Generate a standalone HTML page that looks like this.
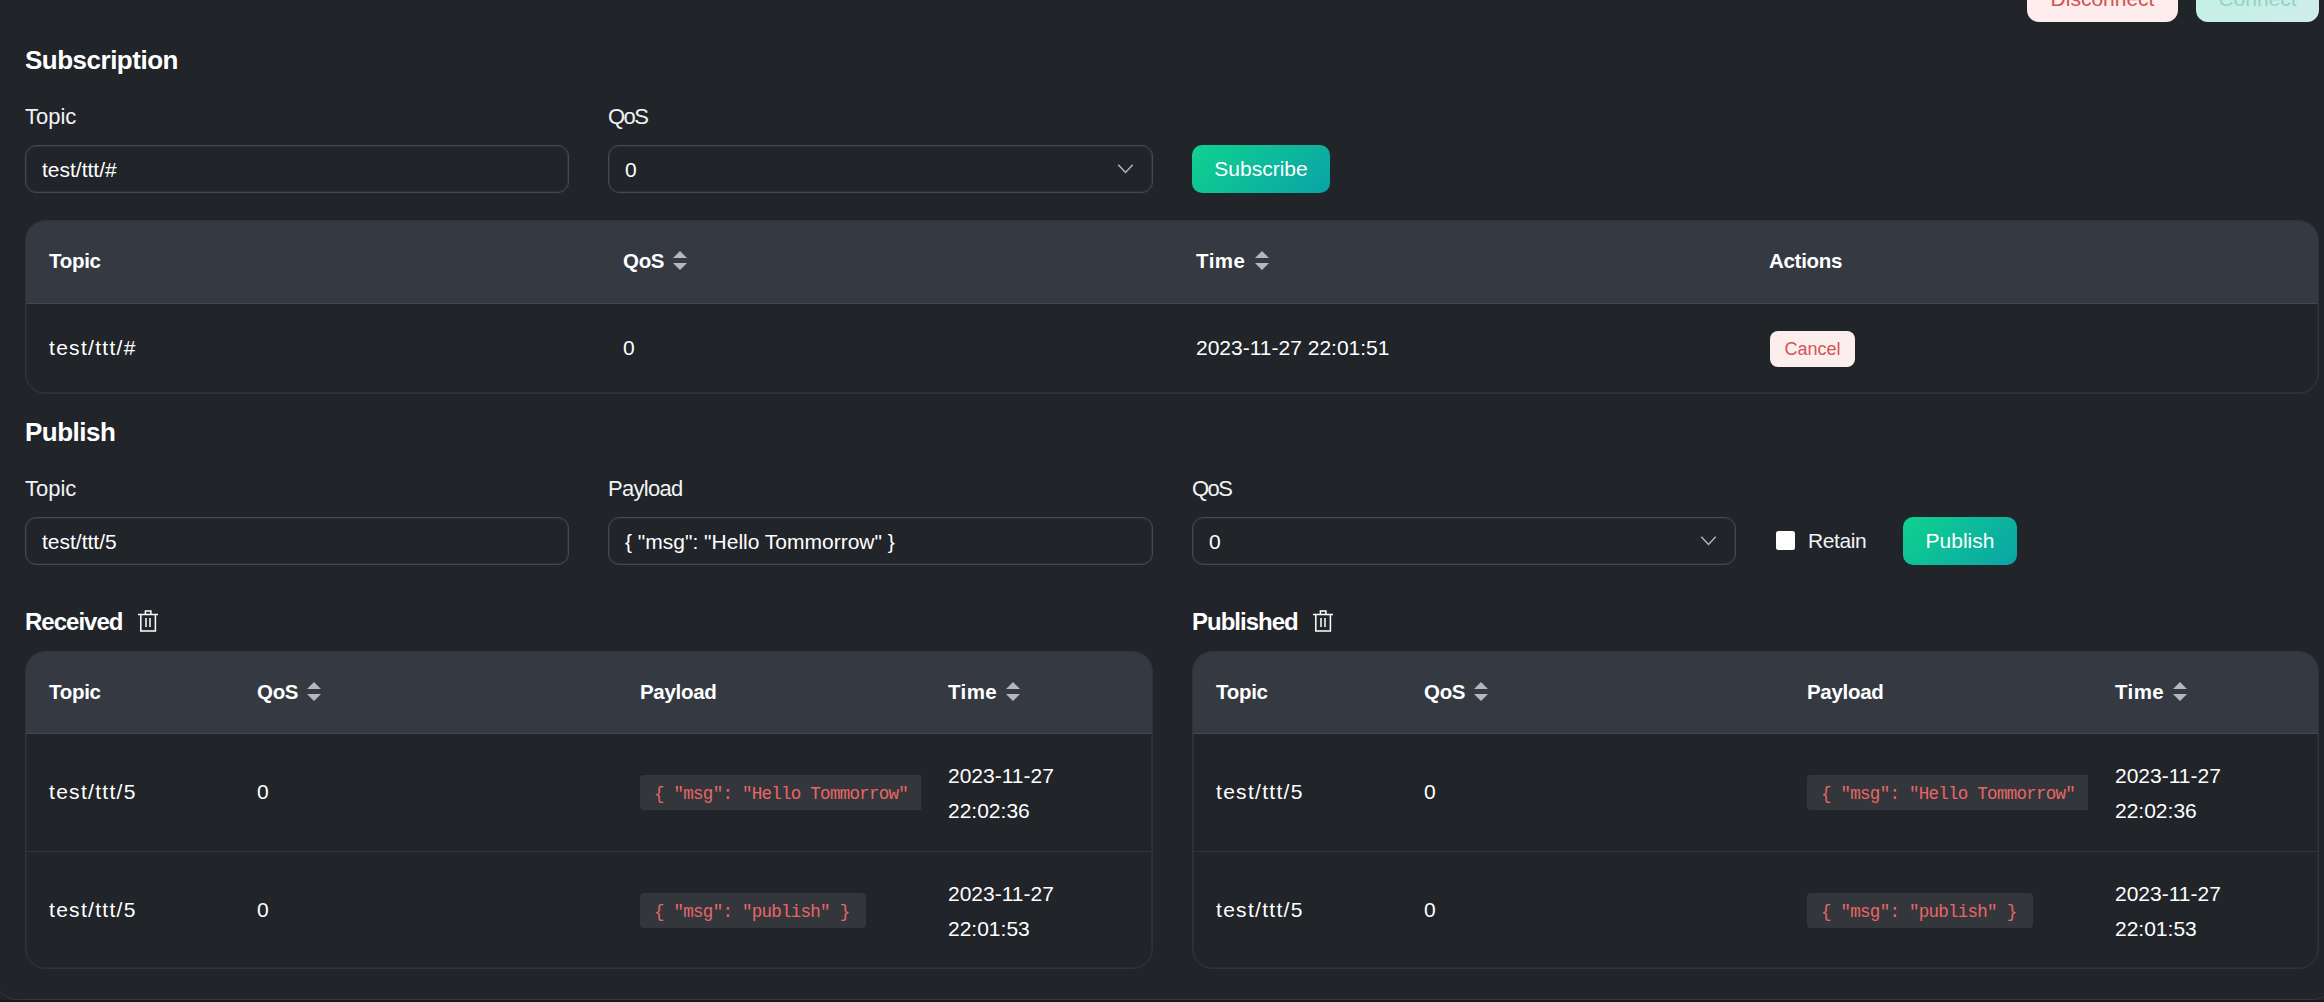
<!DOCTYPE html>
<html><head><meta charset="utf-8">
<style>
*{box-sizing:border-box;margin:0;padding:0}
html,body{width:2324px;height:1002px;overflow:hidden;background:#212429;font-family:"Liberation Sans",sans-serif;color:#f2f3f5}
.card{position:absolute;left:-5px;top:-40px;width:2340px;height:1040px;background:#212429;border:1px solid #33363d;border-radius:22px}
.abs{position:absolute}
.h1{font-size:26px;font-weight:bold;letter-spacing:-0.5px;line-height:30px;color:#fff}
.h2{font-size:24px;font-weight:bold;letter-spacing:-1px;line-height:28px;color:#fff}
.lbl{font-size:22px;line-height:26px;color:#f2f3f5}
.inp{position:absolute;height:48px;border:1px solid #46494f;box-shadow:inset 0 0 0 1px rgba(70,73,79,0.35);border-radius:11px;background:#212429;font-size:21px;line-height:48px;padding-left:16px;color:#fff}
.chev{position:absolute;right:19px;top:18px}
.btn-g{position:absolute;height:48px;border-radius:10px;background:linear-gradient(135deg,#10d28f 0%,#0aa3a6 100%);color:#fff;font-size:21px;line-height:48px;text-align:center}
.tbl{position:absolute;border:1px solid #30333a;border-radius:20px;overflow:hidden;background:#212429;box-shadow:inset 0 0 0 1px rgba(48,51,60,0.7)}
.th{position:absolute;left:0;right:0;top:0;height:83px;background:#353942;border-bottom:1px solid #44474e}
.hcell{position:absolute;font-size:20.5px;font-weight:bold;letter-spacing:-0.3px;line-height:24px;color:#fff;white-space:nowrap}
.cell{position:absolute;font-size:21px;line-height:35px;color:#fff;white-space:nowrap}
.sep{position:absolute;left:0;right:0;height:1px;background:#30333a}
.sort{position:absolute}
.code{position:absolute;height:35px;background:#33363b;border-radius:4px;font-family:"Liberation Mono",monospace;font-size:17.5px;letter-spacing:-0.73px;line-height:35px;color:#ea6666;padding:2px 0 0 14px;white-space:pre;overflow:hidden}
</style></head>
<body>
<div class="card"></div>
<div class="abs" style="left:0;top:1000px;width:2324px;height:2px;background:#18191c"></div>

<!-- top buttons -->
<div class="abs" style="left:2027px;top:-26px;width:151px;height:48px;border-radius:12px;background:#fdeded;color:#d6514d;font-size:21px;line-height:50px;text-align:center">Disconnect</div>
<div class="abs" style="left:2196px;top:-26px;width:123px;height:48px;border-radius:12px;background:linear-gradient(135deg,#c2f0e2,#d0ecec);color:#8dd6be;font-size:21px;line-height:50px;text-align:center">Connect</div>

<!-- Subscription -->
<div class="abs h1" style="left:25px;top:45px">Subscription</div>
<div class="abs lbl" style="left:25px;top:104px">Topic</div>
<div class="abs lbl" style="left:608px;top:104px;letter-spacing:-1.6px">QoS</div>
<div class="inp" style="left:25px;top:145px;width:544px">test/ttt/#</div>
<div class="inp" style="left:608px;top:145px;width:545px">0
  <svg class="chev" width="16" height="10" viewBox="0 0 16 10"><path d="M1.25 0.75 L8.5 8.5 L15.75 0.75" fill="none" stroke="#b4b6bc" stroke-width="1.5"/></svg></div>
<div class="btn-g" style="left:1192px;top:145px;width:138px">Subscribe</div>

<div class="tbl" style="left:25px;top:220px;width:2294px;height:174px">
  <div class="th"></div>
  <div class="hcell" style="left:23px;top:28px">Topic</div>
  <div class="hcell" style="left:597px;top:28px">QoS</div>
  <div class="hcell" style="left:1170px;top:28px;letter-spacing:0.5px">Time</div>
  <div class="hcell" style="left:1743px;top:28px">Actions</div>
  <svg class="sort" style="left:647px;top:30px" width="14" height="19" viewBox="0 0 14 19"><path d="M0 7 L7 0 L14 7 Z M0 12 L7 19 L14 12 Z" fill="#b5b7bd"/></svg>
  <svg class="sort" style="left:1229px;top:30px" width="14" height="19" viewBox="0 0 14 19"><path d="M0 7 L7 0 L14 7 Z M0 12 L7 19 L14 12 Z" fill="#b5b7bd"/></svg>
  <div class="cell" style="left:23px;top:109px;letter-spacing:1.3px">test/ttt/#</div>
  <div class="cell" style="left:597px;top:109px">0</div>
  <div class="cell" style="left:1170px;top:109px">2023-11-27 22:01:51</div>
  <div class="abs" style="left:1744px;top:110px;width:85px;height:36px;border-radius:8px;background:#fdeeee;color:#d05555;font-size:18px;line-height:36px;text-align:center">Cancel</div>
</div>

<!-- Publish -->
<div class="abs h1" style="left:25px;top:417px">Publish</div>
<div class="abs lbl" style="left:25px;top:476px">Topic</div>
<div class="abs lbl" style="left:608px;top:476px;letter-spacing:-0.7px">Payload</div>
<div class="abs lbl" style="left:1192px;top:476px;letter-spacing:-1.6px">QoS</div>
<div class="inp" style="left:25px;top:517px;width:544px">test/ttt/5</div>
<div class="inp" style="left:608px;top:517px;width:545px">{ "msg": "Hello Tommorrow" }</div>
<div class="inp" style="left:1192px;top:517px;width:544px">0
  <svg class="chev" width="16" height="10" viewBox="0 0 16 10"><path d="M1.25 0.75 L8.5 8.5 L15.75 0.75" fill="none" stroke="#b4b6bc" stroke-width="1.5"/></svg></div>
<div class="abs" style="left:1776px;top:531px;width:19px;height:19px;border-radius:2.5px;background:#fff"></div>
<div class="abs" style="left:1808px;top:526px;font-size:21px;line-height:30px;letter-spacing:-0.4px">Retain</div>
<div class="btn-g" style="left:1903px;top:517px;width:114px">Publish</div>

<!-- Received / Published -->
<div class="abs h2" style="left:25px;top:608px">Received</div>
<svg class="abs" style="left:137px;top:609px" width="22" height="24" viewBox="0 0 22 24"><path d="M1 5.5 H21 M8.4 5.5 V2 H13.9 V5.5 M3.8 5.5 V21.9 H18.4 V5.5 M9 9 V18 M13 9 V18" fill="none" stroke="#fff" stroke-width="1.5"/></svg>
<div class="abs h2" style="left:1192px;top:608px">Published</div>
<svg class="abs" style="left:1312px;top:609px" width="22" height="24" viewBox="0 0 22 24"><path d="M1 5.5 H21 M8.4 5.5 V2 H13.9 V5.5 M3.8 5.5 V21.9 H18.4 V5.5 M9 9 V18 M13 9 V18" fill="none" stroke="#fff" stroke-width="1.5"/></svg>

<div class="tbl" style="left:25px;top:651px;width:1128px;height:318px">
  <div class="th" style="height:82px"></div>
  <div class="hcell" style="left:23px;top:28px">Topic</div>
  <div class="hcell" style="left:231px;top:28px">QoS</div>
  <div class="hcell" style="left:614px;top:28px">Payload</div>
  <div class="hcell" style="left:922px;top:28px;letter-spacing:0.4px">Time</div>
  <svg class="sort" style="left:281px;top:30px" width="14" height="19" viewBox="0 0 14 19"><path d="M0 7 L7 0 L14 7 Z M0 12 L7 19 L14 12 Z" fill="#b5b7bd"/></svg>
  <svg class="sort" style="left:980px;top:30px" width="14" height="19" viewBox="0 0 14 19"><path d="M0 7 L7 0 L14 7 Z M0 12 L7 19 L14 12 Z" fill="#b5b7bd"/></svg>
  <div class="cell" style="left:23px;top:122px;letter-spacing:1.3px">test/ttt/5</div>
  <div class="cell" style="left:231px;top:122px">0</div>
  <div class="code" style="left:614px;top:123px;width:281px;border-radius:4px 0 0 4px">{ "msg": "Hello Tommorrow"</div>
  <div class="cell" style="left:922px;top:106px">2023-11-27<br>22:02:36</div>
  <div class="sep" style="top:199px"></div>
  <div class="cell" style="left:23px;top:240px;letter-spacing:1.3px">test/ttt/5</div>
  <div class="cell" style="left:231px;top:240px">0</div>
  <div class="code" style="left:614px;top:241px;width:226px">{ "msg": "publish" }</div>
  <div class="cell" style="left:922px;top:224px">2023-11-27<br>22:01:53</div>
</div>

<div class="tbl" style="left:1192px;top:651px;width:1127px;height:318px">
  <div class="th" style="height:82px"></div>
  <div class="hcell" style="left:23px;top:28px">Topic</div>
  <div class="hcell" style="left:231px;top:28px">QoS</div>
  <div class="hcell" style="left:614px;top:28px">Payload</div>
  <div class="hcell" style="left:922px;top:28px;letter-spacing:0.4px">Time</div>
  <svg class="sort" style="left:281px;top:30px" width="14" height="19" viewBox="0 0 14 19"><path d="M0 7 L7 0 L14 7 Z M0 12 L7 19 L14 12 Z" fill="#b5b7bd"/></svg>
  <svg class="sort" style="left:980px;top:30px" width="14" height="19" viewBox="0 0 14 19"><path d="M0 7 L7 0 L14 7 Z M0 12 L7 19 L14 12 Z" fill="#b5b7bd"/></svg>
  <div class="cell" style="left:23px;top:122px;letter-spacing:1.3px">test/ttt/5</div>
  <div class="cell" style="left:231px;top:122px">0</div>
  <div class="code" style="left:614px;top:123px;width:281px;border-radius:4px 0 0 4px">{ "msg": "Hello Tommorrow"</div>
  <div class="cell" style="left:922px;top:106px">2023-11-27<br>22:02:36</div>
  <div class="sep" style="top:199px"></div>
  <div class="cell" style="left:23px;top:240px;letter-spacing:1.3px">test/ttt/5</div>
  <div class="cell" style="left:231px;top:240px">0</div>
  <div class="code" style="left:614px;top:241px;width:226px">{ "msg": "publish" }</div>
  <div class="cell" style="left:922px;top:224px">2023-11-27<br>22:01:53</div>
</div>

</body></html>
